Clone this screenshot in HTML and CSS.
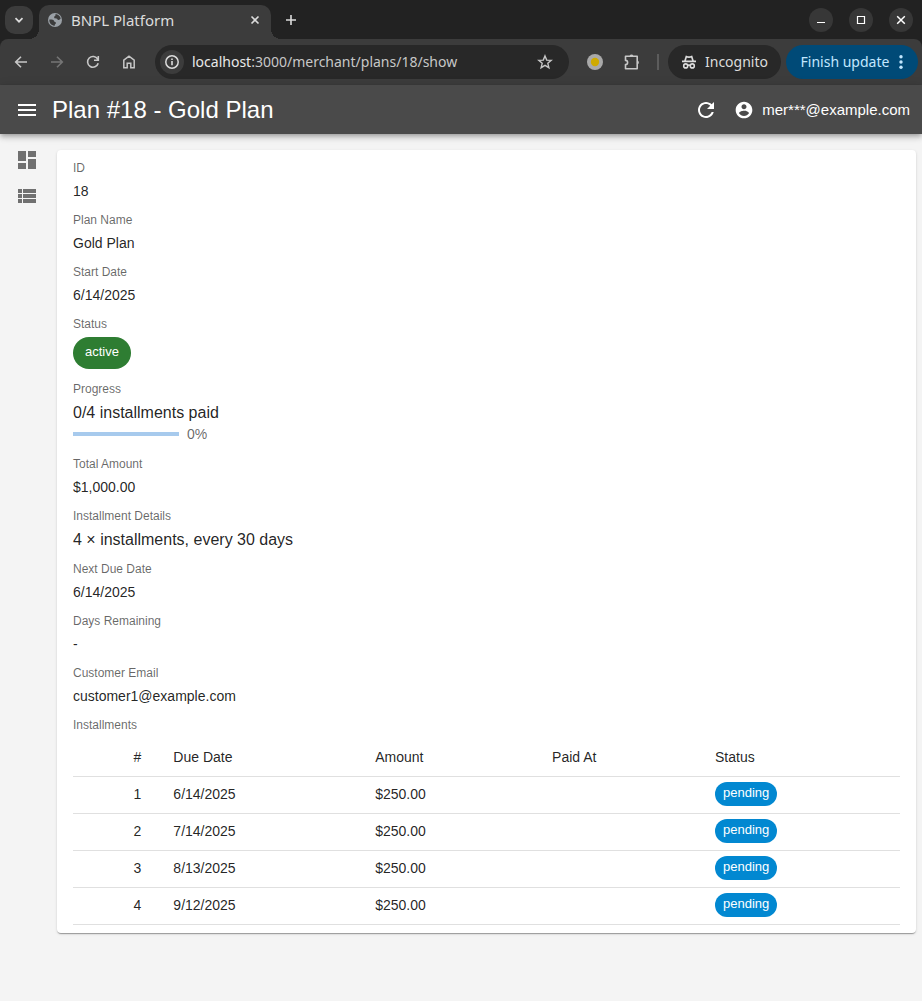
FILE: index.html
```
<!DOCTYPE html>
<html lang="en">
<head>
<meta charset="utf-8">
<meta name="viewport" content="width=device-width, initial-scale=1">
<title>BNPL Platform</title>
<link rel="stylesheet" href="styles.css">
</head>
<body>
<div class="browser">
  <div class="tabstrip">
    <button class="tab-search" type="button" aria-label="Search tabs"><svg width="10" height="10" viewBox="0 0 10 10"><path d="M1.500 3.200 5 6.700l3.500-3.500" fill="none" stroke="currentColor" stroke-width="1.700"/></svg></button>
    <div class="tab">
      <svg width="16" height="16" viewBox="0 0 16 16"><circle cx="8" cy="8" r="7" fill="#9aa0a6"/><path d="M2.400 7.600c2.200 0 4.400-.1 4.700 1.500.2 1.300 1.700.8 1.900 1.900.1.900-1.300.8-1.500 2.900-3.300-.4-5.600-3.300-5.100-6.300ZM8.600 2c2.500.3 4.600 2 5.100 4.500-.9.400-1.100 1.700-2.300 1.500-1.300-.2-.7-1.500-2-1.600-1.200 0-2.200.1-2.300-1.100-.1-1.100 1.200-.8 1.300-1.700 0-.6.200-1 .2-1.600Z" fill="#3c3c3c"/></svg>
      <span class="tab-title">BNPL Platform</span>
      <button class="tab-close" type="button" aria-label="Close tab"><svg width="10" height="10" viewBox="0 0 10 10"><path d="m1.500 1.500 7 7m0-7-7 7" stroke="currentColor" stroke-width="1.600"/></svg></button>
    </div>
    <button class="new-tab" type="button" aria-label="New tab"><svg width="12" height="12" viewBox="0 0 12 12"><path d="M6 1v10M1 6h10" stroke="currentColor" stroke-width="1.600"/></svg></button>
    <div class="window-controls">
      <button type="button" aria-label="Minimize"><svg width="10" height="10" viewBox="0 0 10 10"><path d="M1 7.500h8" stroke="currentColor"/></svg></button>
      <button type="button" aria-label="Maximize"><svg width="10" height="10" viewBox="0 0 10 10"><path d="M1.500 1.500h7v7h-7z" fill="none" stroke="currentColor" stroke-width="1.200"/></svg></button>
      <button type="button" aria-label="Close window"><svg width="10" height="10" viewBox="0 0 10 10"><path d="m1.200 1.200 7.600 7.600m0-7.600L1.200 8.800" stroke="currentColor" stroke-width="1.500"/></svg></button>
    </div>
  </div>
  <div class="toolbar">
    <div class="nav-buttons">
      <button type="button" aria-label="Back"><svg width="16" height="16" viewBox="0 0 16 16"><path d="M14 8H3M8 2.700 2.700 8 8 13.300" fill="none" stroke="currentColor" stroke-width="1.600"/></svg></button>
      <button type="button" aria-label="Forward" disabled><svg width="16" height="16" viewBox="0 0 16 16"><path d="M2 8h11M8 2.700 13.300 8 8 13.300" fill="none" stroke="currentColor" stroke-width="1.600"/></svg></button>
      <button type="button" aria-label="Reload"><svg width="16" height="16" viewBox="0 0 16 16"><path d="M13.200 9.300A5.400 5.400 0 1 1 12.700 5.200M13.300 2v4.200H9" fill="none" stroke="currentColor" stroke-width="1.600"/></svg></button>
      <button type="button" aria-label="Home"><svg width="16" height="16" viewBox="0 0 16 16"><path d="M2.800 6.200 8 2.200l5.200 4v7.600H9.800V9.300H6.200v4.500H2.800z" fill="none" stroke="currentColor" stroke-width="1.500"/></svg></button>
    </div>
    <div class="address">
      <button class="site-info" type="button" aria-label="Site information"><svg width="16" height="16" viewBox="0 0 16 16"><circle cx="8" cy="8" r="6.200" fill="none" stroke="currentColor" stroke-width="1.500"/><path d="M8 7v4.200M8 4.500v1.600" stroke="currentColor" stroke-width="1.600"/></svg></button>
      <div class="url"><span class="url-host">localhost</span>:3000/merchant/plans/18/show</div>
      <button class="bookmark" type="button" aria-label="Bookmark"><svg width="16" height="16" viewBox="0 0 16 16"><path d="m8 1.900 1.700 4.200 4.500.3-3.400 2.900 1.100 4.400L8 11.300l-3.900 2.400 1.100-4.400-3.400-2.900 4.500-.3z" fill="none" stroke="currentColor" stroke-width="1.400"/></svg></button>
    </div>
    <button class="extension" type="button" aria-label="Extension"><svg width="16" height="16" viewBox="0 0 16 16"><circle cx="8" cy="8" r="8" fill="#a9a9a9"/><circle cx="8" cy="8" r="4.200" fill="#cfaa00"/></svg></button>
    <button class="extensions" type="button" aria-label="Extensions"><svg width="18" height="18" viewBox="0 0 18 18"><path d="M2.500 3.300H14.200V15.700H2.500V11.600a2.100 2.100 0 0 0 0-4.200z" fill="none" stroke="currentColor" stroke-width="1.600" stroke-linejoin="round"/><path d="M6.600 3a2 2 0 0 1 3.800 0zM14.500 7.500a2 2 0 0 1 0 3.800z" fill="currentColor"/></svg></button>
    <span class="divider"></span>
    <button class="incognito" type="button"><svg width="16" height="16" viewBox="0 0 16 16"><path d="M1 7.400h14M3.800 7.400l1.500-4.800c1.300.6 4.100.6 5.400 0l1.500 4.800M6.800 11.500c.6-.6 1.800-.6 2.400 0" fill="none" stroke="currentColor" stroke-width="1.700"/><circle cx="4.700" cy="11.900" r="2" fill="none" stroke="currentColor" stroke-width="1.600"/><circle cx="11.300" cy="11.900" r="2" fill="none" stroke="currentColor" stroke-width="1.600"/></svg>Incognito</button>
    <button class="update" type="button">Finish update<svg width="4" height="16" viewBox="0 0 4 16" fill="currentColor"><circle cx="2" cy="2.700" r="1.700"/><circle cx="2" cy="8" r="1.700"/><circle cx="2" cy="13.300" r="1.700"/></svg></button>
  </div>
</div>

<header class="appbar">
  <button class="menu-toggle" type="button" aria-label="Toggle menu"><svg width="24" height="24" viewBox="0 0 24 24" fill="currentColor"><path d="M3 18h18v-2H3zm0-5h18v-2H3zm0-7v2h18V6z"/></svg></button>
  <h1 class="title">Plan #18 - Gold Plan</h1>
  <button class="refresh" type="button" aria-label="Refresh"><svg width="24" height="24" viewBox="0 0 24 24" fill="currentColor"><path d="M17.650 6.350C16.200 4.900 14.210 4 12 4c-4.420 0-7.990 3.580-7.990 8s3.570 8 7.990 8c3.730 0 6.840-2.550 7.730-6h-2.080c-.82 2.330-3.040 4-5.650 4-3.310 0-6-2.690-6-6s2.690-6 6-6c1.660 0 3.140.69 4.220 1.780L13 11h7V4z"/></svg></button>
  <button class="account" type="button"><svg width="20" height="20" viewBox="0 0 24 24" fill="currentColor"><path d="M12 2C6.480 2 2 6.480 2 12s4.480 10 10 10 10-4.480 10-10S17.520 2 12 2m0 3c1.660 0 3 1.340 3 3s-1.340 3-3 3-3-1.340-3-3 1.340-3 3-3m0 14.200c-2.500 0-4.710-1.280-6-3.220.030-1.990 4-3.080 6-3.080 1.990 0 5.970 1.090 6 3.080-1.290 1.940-3.500 3.220-6 3.220"/></svg>mer***@example.com</button>
</header>

<div class="layout">
  <nav class="sidebar" aria-label="Main">
    <a href="#dashboard" aria-label="Dashboard"><svg width="24" height="24" viewBox="0 0 24 24" fill="currentColor"><path d="M3 13h8V3H3zm0 8h8v-6H3zm10 0h8V11h-8zm0-18v6h8V3z"/></svg></a>
    <a href="#plans" aria-label="Plans"><svg width="24" height="24" viewBox="0 0 24 24" fill="currentColor"><path d="M3 14h4v-4H3zm0 5h4v-4H3zM3 9h4V5H3zm5 5h13v-4H8zm0 5h13v-4H8zM8 5v4h13V5z"/></svg></a>
  </nav>
  <main class="card">
    <dl class="fields">
      <div class="field"><dt>ID</dt><dd>18</dd></div>
      <div class="field"><dt>Plan Name</dt><dd>Gold Plan</dd></div>
      <div class="field"><dt>Start Date</dt><dd>6/14/2025</dd></div>
      <div class="field"><dt>Status</dt><dd><span class="chip chip-success">active</span></dd></div>
      <div class="field"><dt id="progress-label">Progress</dt><dd><div class="large">0/4 installments paid</div><div class="progress"><span class="bar" role="progressbar" aria-labelledby="progress-label" aria-valuenow="0" aria-valuemin="0" aria-valuemax="100"></span>0%</div></dd></div>
      <div class="field"><dt>Total Amount</dt><dd>$1,000.00</dd></div>
      <div class="field"><dt>Installment Details</dt><dd class="large">4 × installments, every 30 days</dd></div>
      <div class="field"><dt>Next Due Date</dt><dd>6/14/2025</dd></div>
      <div class="field"><dt>Days Remaining</dt><dd>-</dd></div>
      <div class="field"><dt>Customer Email</dt><dd>customer1@example.com</dd></div>
      <div class="field"><dt>Installments</dt><dd>
        <table class="installments">
          <thead><tr><th class="col-number" scope="col">#</th><th class="col-due" scope="col">Due Date</th><th class="col-amount" scope="col">Amount</th><th class="col-paid" scope="col">Paid At</th><th class="col-status" scope="col">Status</th></tr></thead>
          <tbody>
            <tr><td class="col-number">1</td><td>6/14/2025</td><td>$250.00</td><td></td><td><span class="chip chip-small chip-info">pending</span></td></tr>
            <tr><td class="col-number">2</td><td>7/14/2025</td><td>$250.00</td><td></td><td><span class="chip chip-small chip-info">pending</span></td></tr>
            <tr><td class="col-number">3</td><td>8/13/2025</td><td>$250.00</td><td></td><td><span class="chip chip-small chip-info">pending</span></td></tr>
            <tr><td class="col-number">4</td><td>9/12/2025</td><td>$250.00</td><td></td><td><span class="chip chip-small chip-info">pending</span></td></tr>
          </tbody>
        </table>
      </dd></div>
    </dl>
  </main>
</div>
</body>
</html>
```
FILE: styles.css
```
* { box-sizing: border-box; }

body {
  margin: 0;
  background: #f4f4f4;
  color: rgba(0, 0, 0, .87);
  font-family: "Liberation Sans", Arial, sans-serif;
  font-size: 14px;
  line-height: 20px;
}

button {
  display: flex;
  align-items: center;
  justify-content: center;
  flex: none;
  margin: 0;
  padding: 0;
  border: 0;
  background: none;
  color: inherit;
  font: inherit;
  cursor: pointer;
}

svg { display: block; flex: none; }

/* Browser window */
.browser {
  background: #222;
  color: #dcdcdc;
  font-family: "Noto Sans", "Open Sans", sans-serif;
  font-size: 14px;
}

.tabstrip {
  display: flex;
  align-items: center;
  height: 39px;
  padding: 0 9px 0 5px;
}

.tab-search {
  width: 28px;
  height: 28px;
  margin-right: 6px;
  border-radius: 10px;
  background: #3c3c3c;
}

.tab {
  position: relative;
  display: flex;
  align-items: center;
  gap: 8px;
  width: 232px;
  height: 34px;
  align-self: flex-end;
  padding: 0 8px 5px;
  border-radius: 10px 10px 0 0;
  background: #3c3c3c;
}

.tab::before,
.tab::after {
  content: "";
  position: absolute;
  bottom: 0;
  width: 10px;
  height: 10px;
}

.tab::before {
  right: 100%;
  background: radial-gradient(circle at 0 0, transparent 10px, #3c3c3c 10px);
}

.tab::after {
  left: 100%;
  background: radial-gradient(circle at 100% 0, transparent 10px, #3c3c3c 10px);
}

.tab-title { flex: 1; font-size: 15px; }
.tab-close { width: 16px; height: 16px; }

.new-tab {
  width: 28px;
  height: 28px;
  margin-left: 6px;
}

.window-controls {
  display: flex;
  gap: 16px;
  margin-left: auto;
}

.window-controls button {
  width: 24px;
  height: 24px;
  border-radius: 50%;
  background: #373737;
  color: #fff;
}

.toolbar {
  display: flex;
  align-items: center;
  height: 46px;
  padding: 0 4px 0 13px;
  border-radius: 8px 8px 0 0;
  background: #3c3c3c;
}

.nav-buttons { display: flex; gap: 20px; color: #c7c7c7; }
.nav-buttons button:disabled { color: #757575; }

.address {
  display: flex;
  align-items: center;
  flex: 1;
  min-width: 0;
  height: 34px;
  margin-left: 18px;
  padding: 0 16px 0 5px;
  border-radius: 17px;
  background: #282828;
}

.site-info {
  width: 24px;
  height: 24px;
  border-radius: 50%;
  background: #3c3c3c;
}

.url {
  flex: 1;
  min-width: 0;
  margin-left: 8px;
  overflow: hidden;
  color: #c7c7c7;
  white-space: nowrap;
}

.url-host { color: #e8e8e8; }
.bookmark { color: #c7c7c7; }
.extension { margin-left: 18px; }
.extensions { margin-left: 20px; color: #c7c7c7; }

.divider {
  width: 2px;
  height: 16px;
  margin: 0 9px 0 16px;
  background: #5c5c5c;
}

.incognito,
.update {
  gap: 8px;
  height: 34px;
  border-radius: 17px;
}

.incognito {
  width: 113px;
  background: #282828;
}

.update {
  gap: 10px;
  width: 132px;
  margin-left: 5px;
  background: #004a77;
  color: #c2e7ff;
}

/* Application bar */
.appbar {
  position: relative;
  display: flex;
  align-items: center;
  height: 49px;
  padding: 0 12px 0 15px;
  background: #4a4a4a;
  color: #fff;
  box-shadow: 0 2px 4px -1px rgba(0, 0, 0, .2), 0 4px 5px rgba(0, 0, 0, .14), 0 1px 10px rgba(0, 0, 0, .12);
}

.title {
  flex: 1;
  margin: 0 0 0 13px;
  font-size: 24px;
  font-weight: 400;
  line-height: 32px;
}

.account { gap: 8px; margin-left: 16px; font-size: 15px; }

/* Page */
.layout { display: flex; }

.sidebar {
  display: flex;
  flex: none;
  flex-direction: column;
  gap: 12px;
  width: 57px;
  padding: 14px 15px;
}

.sidebar a { color: rgba(0, 0, 0, .54); }

.card {
  flex: 1;
  min-width: 0;
  margin: 16px 6px 16px 0;
  padding: 9px 16px 8px;
  border-radius: 4px;
  background: #fff;
  box-shadow: 0 2px 1px -1px rgba(0, 0, 0, .2), 0 1px 1px rgba(0, 0, 0, .14), 0 1px 3px rgba(0, 0, 0, .12);
}

.fields {
  display: flex;
  flex-direction: column;
  gap: 10px;
  margin: 0;
}

.field dt {
  color: rgba(0, 0, 0, .6);
  font-size: 12px;
  line-height: 18px;
}

.field dd { margin: 0; padding-top: 4px; }

.field .large { font-size: 16px; line-height: 21px; }

.progress {
  display: flex;
  align-items: center;
  gap: 8px;
  color: rgba(0, 0, 0, .6);
  line-height: 22px;
}

.bar {
  width: 106px;
  height: 4px;
  background: #a7caed;
}

.chip {
  display: flex;
  align-items: center;
  width: fit-content;
  height: 32px;
  margin-bottom: 1px;
  padding: 0 12px 2px;
  border-radius: 16px;
  color: #fff;
  font-size: 13px;
}

.chip-small { height: 24px; margin: 0; padding: 0 8px 2px; }
.chip-success { background: #2e7d32; }
.chip-info { background: #0288d1; }

.installments {
  width: 100%;
  border-collapse: collapse;
  table-layout: fixed;
}

.installments th,
.installments td {
  height: 37px;
  padding: 6px 16px;
  border-bottom: 1px solid #e0e0e0;
  font-weight: 400;
  text-align: left;
}

.installments th { height: 38px; }
.installments td { padding: 5px 16px 6px; }

.installments .col-number { width: 10.2%; text-align: right; }
.col-due { width: 24.4%; }
.col-amount { width: 21.4%; }
.col-paid { width: 19.7%; }
.col-status { width: 24.3%; }
```
